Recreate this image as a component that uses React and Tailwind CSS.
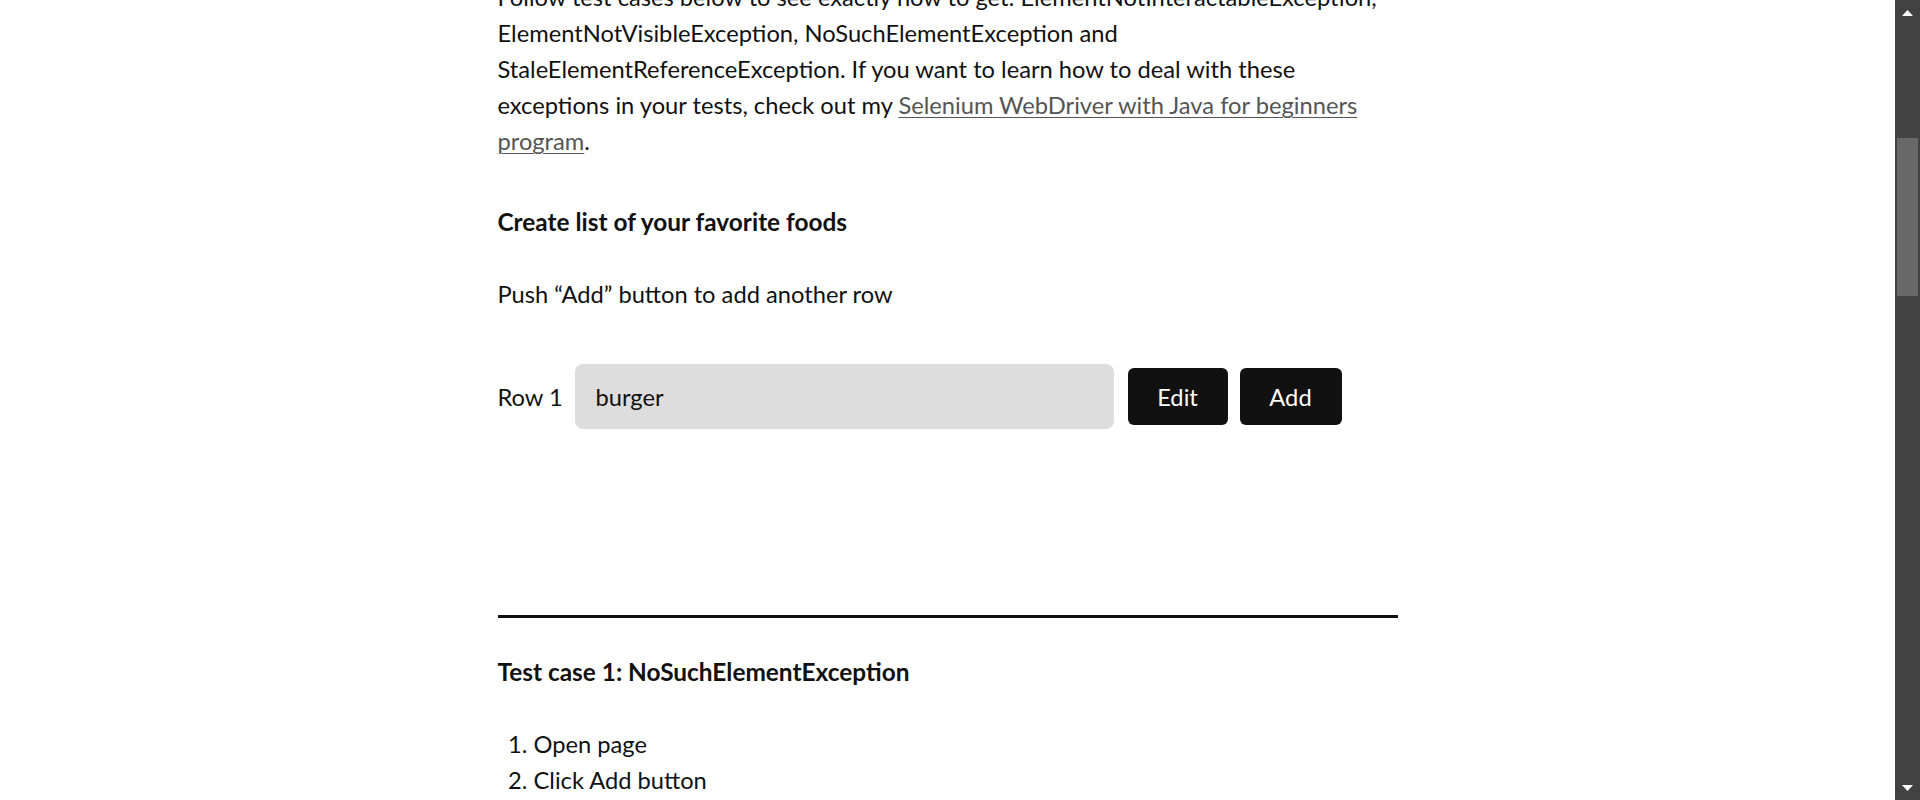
import React from "react";

export default function App() {
  return (
    <div className="flex h-[800px] w-[1920px] overflow-hidden bg-white">
      <div className="flex-1 overflow-hidden">
        <div
          className="mx-auto mt-[-21px] w-[900px] text-[23.7px] leading-[36px] text-[#111111]"
          style={{ fontFamily: "Lato, 'Liberation Sans', sans-serif" }}
        >
          <p>
            Follow test cases below to see exactly how to get: ElementNotInteractableException,
            ElementNotVisibleException, NoSuchElementException and StaleElementReferenceException.
            If you want to learn how to deal with these exceptions in your tests, check out my{" "}
            <a href="#" className="text-[#555555] underline decoration-1 underline-offset-[3px]">
              Selenium WebDriver with Java for beginners program
            </a>
            .
          </p>
          <h2 className="mt-[45px] text-[24.4px] font-bold">Create list of your favorite foods</h2>
          <p className="mt-[36px]">Push “Add” button to add another row</p>
          <div className="mt-[52px] flex items-center">
            <label className="w-[77px] shrink-0">Row 1</label>
            <div className="flex h-[65px] w-[539px] items-center rounded-lg bg-[#dddddd] pl-[21px]">
              burger
            </div>
            <button className="ml-[14px] h-[57px] w-[100px] rounded-md bg-[#111111] text-white">
              Edit
            </button>
            <button className="ml-[12px] h-[57px] w-[102px] rounded-md bg-[#111111] text-white">
              Add
            </button>
          </div>
          <hr className="mt-[186px] border-0 border-t-[3px] border-[#111111]" />
          <h3 className="mt-[36px] text-[24.4px] font-bold">Test case 1: NoSuchElementException</h3>
          <ol className="mt-[36px] list-decimal pl-[36px]">
            <li>Open page</li>
            <li>Click Add button</li>
          </ol>
        </div>
      </div>
      <div className="flex w-[25px] flex-col items-center bg-[#424242]">
        <div className="flex h-[25px] w-full items-center justify-center">
          <svg width="11" height="6" viewBox="0 0 11 6">
            <polygon points="5.5,0 11,6 0,6" fill="#ffffff" />
          </svg>
        </div>
        <div className="mt-[113px] h-[158px] w-[21px] bg-[#686868]" />
        <div className="flex-1" />
        <div className="flex h-[25px] w-full items-center justify-center">
          <svg width="11" height="6" viewBox="0 0 11 6">
            <polygon points="0,0 11,0 5.5,6" fill="#ffffff" />
          </svg>
        </div>
      </div>
    </div>
  );
}
